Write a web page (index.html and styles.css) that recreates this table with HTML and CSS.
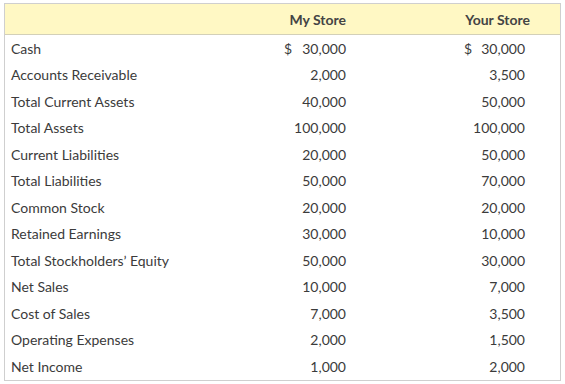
FILE: index.html
```html
<!DOCTYPE html>
<html>
<head>
<meta charset="utf-8">
<link rel="stylesheet" href="styles.css">
</head>
<body>
<div class="sheet">
  <div class="row head">
    <div class="label"></div>
    <div class="num c2">My Store</div>
    <div class="num c3">Your Store</div>
  </div>
  <div class="row"><div class="label">Cash</div><div class="num c2"><span class="cur">$</span>30,000</div><div class="num c3"><span class="cur">$</span>30,000</div></div>
  <div class="row"><div class="label">Accounts Receivable</div><div class="num c2">2,000</div><div class="num c3">3,500</div></div>
  <div class="row"><div class="label">Total Current Assets</div><div class="num c2">40,000</div><div class="num c3">50,000</div></div>
  <div class="row"><div class="label">Total Assets</div><div class="num c2">100,000</div><div class="num c3">100,000</div></div>
  <div class="row"><div class="label">Current Liabilities</div><div class="num c2">20,000</div><div class="num c3">50,000</div></div>
  <div class="row"><div class="label">Total Liabilities</div><div class="num c2">50,000</div><div class="num c3">70,000</div></div>
  <div class="row"><div class="label">Common Stock</div><div class="num c2">20,000</div><div class="num c3">20,000</div></div>
  <div class="row"><div class="label">Retained Earnings</div><div class="num c2">30,000</div><div class="num c3">10,000</div></div>
  <div class="row"><div class="label">Total Stockholders’ Equity</div><div class="num c2">50,000</div><div class="num c3">30,000</div></div>
  <div class="row"><div class="label">Net Sales</div><div class="num c2">10,000</div><div class="num c3">7,000</div></div>
  <div class="row"><div class="label">Cost of Sales</div><div class="num c2">7,000</div><div class="num c3">3,500</div></div>
  <div class="row"><div class="label">Operating Expenses</div><div class="num c2">2,000</div><div class="num c3">1,500</div></div>
  <div class="row"><div class="label">Net Income</div><div class="num c2">1,000</div><div class="num c3">2,000</div></div>
</div>
</body>
</html>
```
FILE: styles.css
```css
html, body {
  margin: 0;
  background: #ffffff;
}
body {
  padding: 3px 0 0 4px;
  font-family: Lato, "Liberation Sans", sans-serif;
  font-size: 14px;
  color: #3b3b3b;
}
.sheet {
  width: 555px;
  border: 1px solid #cfcfcf;
}
.row {
  display: grid;
  grid-template-columns: 175px 180px 1fr;
  height: 26.5px;
  align-items: center;
}
.row.head {
  height: 30px;
  background: #fff8c4;
  border-bottom: 1px solid #d3d0b8;
  font-weight: 700;
  color: #444444;
}
.label {
  padding-left: 6px;
  white-space: nowrap;
}
.num {
  display: flex;
  justify-content: flex-end;
  align-items: baseline;
}
.c2 {
  padding-right: 14px;
}
.c3 {
  padding-right: 35px;
}
.head .c3 {
  padding-right: 30px;
}
.c2 .cur, .c3 .cur {
  margin-right: auto;
  padding-left: 104px;
}
.c3 .cur {
  padding-left: 104px;
}
```
